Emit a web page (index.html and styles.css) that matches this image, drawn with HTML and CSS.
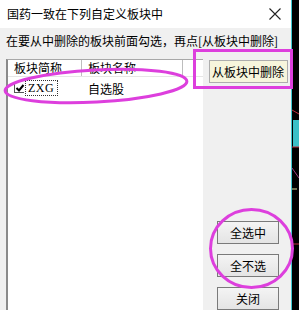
FILE: index.html
```html
<!DOCTYPE html>
<html lang="zh">
<head>
<meta charset="utf-8">
<link rel="stylesheet" href="styles.css">
</head>
<body>
<div class="screen">
  <div class="dialog">
    <div class="titlebar">
      <span class="title">国药一致在下列自定义板块中</span>
      <svg class="close" width="12" height="12" viewBox="0 0 12 12"><path d="M0.5 0.5 L11.5 11.5 M11.5 0.5 L0.5 11.5" stroke="#222" stroke-width="1.1" fill="none"/></svg>
    </div>
    <div class="body">
      <div class="hint">在要从中删除的板块前面勾选，再点[从板块中删除]</div>
      <div class="main">
        <div class="list">
          <div class="list-head">
            <div class="hcell c1">板块简称</div>
            <div class="hcell c2">板块名称</div>
            <div class="hcell c3"></div>
          </div>
          <div class="row">
            <div class="cell c1">
              <span class="cb"><svg width="10" height="10" viewBox="0 0 10 10"><path d="M1.5 5 L4 7.5 L8.5 2" stroke="#000" stroke-width="2" fill="none"/></svg></span>
              <span class="code">ZXG</span>
            </div>
            <div class="cell c2">自选股</div>
          </div>
        </div>
        <div class="side">
          <button class="btn btn-wide btn-hot">从板块中删除</button>
          <button class="btn btn-first">全选中</button>
          <button class="btn">全不选</button>
          <button class="btn">关闭</button>
        </div>
      </div>
    </div>
  </div>
  <div class="strip">
    <svg width="7" height="310" viewBox="0 0 7 310">
      <path d="M0 110 L7 114" stroke="#c03040" stroke-width="1"/>
      <rect x="1" y="120" width="6" height="27" fill="#3cc0c8"/>
      <path d="M0 147 L7 147" stroke="#c03040" stroke-width="1"/>
      <path d="M0 168 L7 178" stroke="#a04080" stroke-width="1"/>
      <path d="M0 189 L5 189" stroke="#e0e0a0" stroke-width="1"/>
      <path d="M0 244 L7 244" stroke="#c03040" stroke-width="1"/>
    </svg>
  </div>
  <svg class="marks" width="299" height="310" viewBox="0 0 299 310">
    <ellipse cx="96" cy="86" rx="91" ry="16" transform="rotate(-3 96 86)" fill="none" stroke="#dd3fdd" stroke-width="3"/>
    <rect x="194.5" y="50.5" width="97" height="37" fill="none" stroke="#dd3fdd" stroke-width="3"/>
    <ellipse cx="251.5" cy="248.5" rx="41" ry="39" fill="none" stroke="#dd3fdd" stroke-width="3"/>
  </svg>
</div>
</body>
</html>
```

FILE: styles.css
```css
* { box-sizing: border-box; }
html, body { margin: 0; padding: 0; }
body {
  width: 299px;
  height: 310px;
  overflow: hidden;
  font-family: "Noto Sans CJK SC", "DejaVu Sans", sans-serif;
  font-size: 12px;
  color: #000;
  background: #f0f0f0;
}
.screen {
  position: relative;
  display: flex;
  width: 299px;
  height: 310px;
  overflow: hidden;
}
.dialog {
  width: 291px;
  height: 310px;
  flex: none;
  display: flex;
  flex-direction: column;
  background: #f0f0f0;
  overflow: hidden;
}
.titlebar {
  flex: none;
  height: 28px;
  background: #ffffff;
  display: flex;
  align-items: center;
  justify-content: space-between;
  padding: 0 10px 0 7px;
}
.title { font-size: 12px; line-height: 14px; }
.close { display: block; }
.body {
  flex: 1 0 auto;
  display: flex;
  flex-direction: column;
  padding-left: 6px;
}
.hint {
  flex: none;
  height: 31px;
  padding-top: 5px;
  line-height: 16px;
  white-space: nowrap;
}
.main {
  flex: 1 0 auto;
  display: flex;
}
.list {
  width: 197px;
  flex: none;
  background: #ffffff;
  border-left: 2px solid #8a8a8a;
  border-top: 1px solid #a8a8a8;
}
.list-head {
  display: flex;
  height: 17px;
  border-bottom: 1px solid #e6e6e6;
}
.hcell {
  line-height: 15px;
  padding-left: 6px;
  color: #000;
  border-right: 1px solid #bdbdbd;
}
.c1 { width: 74px; }
.c2 { width: 101px; }
.c3 { flex: 1; border-right: none; }
.row {
  display: flex;
  height: 18px;
  margin-top: 2px;
  align-items: center;
}
.cell.c1 {
  display: flex;
  align-items: center;
  padding-left: 6px;
}
.cell.c2 { padding-left: 6px; }
.cb {
  width: 10px;
  height: 10px;
  display: block;
  border-left: 1px solid #555;
  border-bottom: 1px solid #555;
  background: #fff;
}
.cb svg { display: block; }
.code {
  margin-left: 1px;
  padding: 0 3px 0 2px;
  height: 16px;
  line-height: 14px;
  border: 1px dotted #333;
  font-family: "Liberation Serif", "DejaVu Serif", serif;
  font-size: 12px;
  letter-spacing: 0.5px;
}
.side {
  flex: 1;
  display: flex;
  flex-direction: column;
  align-items: center;
  padding-top: 1px;
  padding-left: 2px;
}
.btn {
  width: 62px;
  height: 23px;
  margin: 0;
  padding: 0;
  font-family: "Noto Sans CJK SC", "DejaVu Sans", sans-serif;
  font-size: 12px;
  color: #000;
  background: linear-gradient(#f4f4f4, #e4e4e4);
  border: 1px solid #7a7a7a;
  border-radius: 0;
  flex: none;
  margin-bottom: 10px;
}
.btn-wide { width: 79px; }
.btn-hot {
  background: #f6f5dc;
  border-color: #adadad;
}
.btn-first { margin-top: 128px; }
.strip {
  width: 8px;
  height: 310px;
  flex: none;
  background: #000;
  border-left: 1px solid #3ec8d0;
}
.strip svg { display: block; }
.marks {
  position: absolute;
  left: 0;
  top: 0;
  pointer-events: none;
}
```
